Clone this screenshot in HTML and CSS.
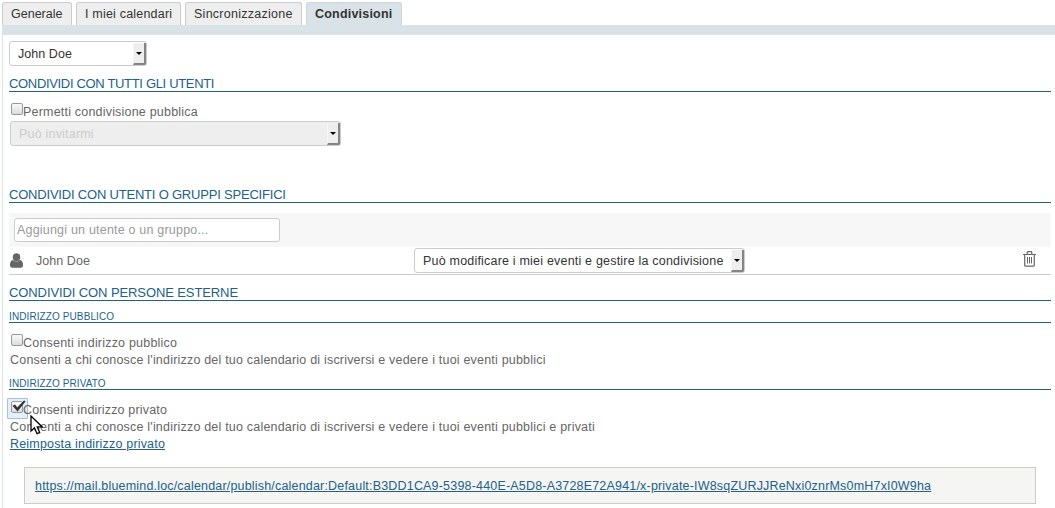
FILE: index.html
```html
<!DOCTYPE html>
<html lang="it">
<head>
<meta charset="utf-8">
<title>Condivisioni</title>
<link rel="stylesheet" href="styles.css">
</head>
<body>
<nav class="tabs">
  <a class="tab tab-general">Generale</a>
  <a class="tab tab-calendars">I miei calendari</a>
  <a class="tab tab-sync">Sincronizzazione</a>
  <a class="tab tab-active">Condivisioni</a>
</nav>
<main class="panel">
  <div class="select select-user"><span class="t-user">John Doe</span><i class="arrow"></i></div>
  <h2 class="heading heading-all"><span>Condividi con tutti gli utenti</span></h2>
  <label class="check check-public"><i class="box"></i><span>Permetti condivisione pubblica</span></label>
  <div class="select select-disabled"><span>Può invitarmi</span><i class="arrow"></i></div>
  <h2 class="heading heading-groups"><span>Condividi con utenti o gruppi specifici</span></h2>
  <div class="adder"><div class="field"><span>Aggiungi un utente o un gruppo...</span></div></div>
  <div class="row">
    <svg class="user" viewBox="0 0 14 15"><ellipse cx="7.500" cy="4.200" rx="3.700" ry="4"/><path d="M4 7Q7.500 10 11 7C13.200 7.500 14 9.200 14 12c0 1.700-.8 2.700-2.200 2.700H3.200C1.800 14.700 1 13.700 1 12c0-2.800.8-4.500 3-5z"/></svg>
    <span class="t-user">John Doe</span>
    <div class="select select-right"><span>Può modificare i miei eventi e gestire la condivisione</span><i class="arrow"></i></div>
    <svg class="trash" viewBox="0 0 13 16"><path d="M0 3.500h13M4.200 3V1.500q0-.8.8-.8h3q.8 0 .8.800V3M1.700 3.500v10.700q0 1 1 1h7.600q1 0 1-1V3.500"/><path class="ribs" d="M4.500 6v6.500M6.500 6v6.500M8.500 6v6.500"/></svg>
  </div>
  <h2 class="heading heading-ext"><span>Condividi con persone esterne</span></h2>
  <h3 class="sub"><span>Indirizzo pubblico</span></h3>
  <label class="check check-address"><i class="box"></i><span>Consenti indirizzo pubblico</span></label>
  <p class="note">Consenti a chi conosce l'indirizzo del tuo calendario di iscriversi e vedere i tuoi eventi pubblici</p>
  <h3 class="sub"><span>Indirizzo privato</span></h3>
  <label class="check check-address check-focus"><i class="box"></i><span class="t-private">Consenti indirizzo privato</span>
    <svg class="tick" viewBox="0 0 14 12"><path d="M.5 5.700 3 4.500l2.200 3L12 .5l1.700.8L5.500 11.400z"/></svg>
    <svg class="cursor" viewBox="0 0 13 20"><path d="M1 1v15l3.500-3.200L7 18.700l2.700-1.100-2.500-5.800H12z"/></svg>
  </label>
  <p class="note">Consenti a chi conosce l'indirizzo del tuo calendario di iscriversi e vedere i tuoi eventi pubblici e privati</p>
  <p class="note"><a class="link">Reimposta indirizzo privato</a></p>
  <div class="address"><a class="link">https://mail.bluemind.loc/calendar/publish/calendar:Default:B3DD1CA9-5398-440E-A5D8-A3728E72A941/x-private-IW8sqZURJJReNxi0znrMs0mH7xI0W9ha</a></div>
</main>
</body>
</html>
```
FILE: styles.css
```css
* { box-sizing: border-box; }
body {
  margin: 0;
  height: 508px;
  padding: 2px 0 0 2px;
  overflow: hidden;
  background: #fff;
  color: #666;
  font: 12.5px/19px "Liberation Sans", Arial, sans-serif;
  letter-spacing: .2px;
}
h2, h3, p { margin: 0; font-weight: normal; }
span, a, p { white-space: nowrap; }

.tabs { display: flex; gap: 4px; height: 23px; }
.tab {
  height: 23px;
  border: 1px solid #ccc;
  border-bottom: 0;
  border-radius: 3px 3px 0 0;
  background: #eee;
  color: #333;
  line-height: 22px;
  padding-left: 8px;
}
.tab-general { width: 70px; letter-spacing: 0; }
.tab-calendars { width: 105px; }
.tab-sync { width: 117px; letter-spacing: .26px; }
.tab-active { width: 96px; border-color: #ccd6dc; background: #d9e2e7; font-weight: bold; }

.panel {
  height: 483px;
  border-top: 10px solid #d9e2e7;
  border-left: 1px solid #d9e2e7;
  padding: 6px 4px 0 6px;
}

.select {
  display: flex;
  align-items: center;
  justify-content: space-between;
  height: 25px;
  border: 1px solid #ccc;
  border-radius: 3px;
  background: #fff;
  color: #333;
  padding-left: 8px;
}
.select span, .row > span { padding-top: 2px; }
.arrow {
  display: flex;
  align-items: center;
  justify-content: center;
  width: 13px;
  height: 22px;
  margin: 1px 0 0;
  background: #eee;
  border: solid #858585;
  border-width: 0 2px 2px 0;
  border-left: 1px solid #f6f6f6;
  border-radius: 0 0 2px 0;
}
.arrow::after {
  content: "";
  margin-top: 1px;
  border: 3px solid transparent;
  border-top-color: #000;
  border-bottom: 0;
}
.t-user { letter-spacing: .05px; }
.select-user { width: 138px; }
.select-disabled { width: 331px; margin-left: 1px; background: #eee; color: #ccc; }
.select-right { width: 331px; }

.heading {
  height: 17px;
  border-bottom: 1px solid #225f8a;
  color: #225f8a;
  font-size: 13px;
  line-height: 17px;
  text-transform: uppercase;
}
.heading-all { margin-top: 9px; letter-spacing: -.33px; }
.heading-groups { margin-top: 40px; letter-spacing: -.2px; }
.heading-ext { margin-top: 9px; letter-spacing: -.1px; }
.sub {
  height: 13px;
  margin-top: 9px;
  border-bottom: 1px solid #225f8a;
  color: #225f8a;
  font-size: 10px;
  line-height: 13px;
  letter-spacing: .1px;
  text-transform: uppercase;
}

.check { display: flex; height: 17px; padding-left: 2px; position: relative; }
.check-public { margin-top: 11px; margin-bottom: 1px; }
.check-address { margin-top: 11px; }
.box {
  width: 12px;
  height: 12px;
  border: 1px solid #999;
  border-radius: 2px;
  background: linear-gradient(#fafafa, #dcdcdc);
}
.check-focus::before {
  content: "";
  position: absolute;
  left: -2px;
  top: -3px;
  width: 19px;
  height: 19px;
  border: 1px solid #a9bfd6;
  border-radius: 1px;
  background: #e5effa;
}
.check-focus .box, .t-private { position: relative; }
.t-private { letter-spacing: .17px; }
.tick { position: absolute; left: 3px; top: -1px; width: 14px; height: 12px; fill: #2e3436; }
.cursor { position: absolute; left: 21px; top: 14px; width: 13px; height: 20px; fill: #fff; stroke: #000; stroke-width: 1.3; z-index: 2; }

.adder { margin-top: 10px; height: 34px; padding: 5px; background: #f7f7f7; }
.field { width: 266px; height: 24px; border: 1px solid #ccc; border-radius: 3px; background: #fff; color: #999; padding-left: 2px; line-height: 22px; letter-spacing: .2px; }
.row {
  display: grid;
  grid-template-columns: 27px 378px 1fr 28px;
  align-items: center;
  height: 28px;
  padding-bottom: 1px;
  border-bottom: 1px solid #ccc;
}
.user { width: 14px; height: 15px; fill: #666; }
.trash { width: 13px; height: 16px; margin-bottom: 2px; fill: none; stroke: #666; stroke-width: 1.2; }
.trash .ribs { stroke-width: 1; }

.note { height: 17px; padding-left: 1px; }
.link { color: #225f8a; text-decoration: underline; letter-spacing: .185px; }
.address {
  width: 1012px;
  height: 37px;
  margin: 15px 0 0 15px;
  padding-left: 10px;
  border: 1px solid #ccc;
  background: #f5f5f3;
  line-height: 37px;
}
```
